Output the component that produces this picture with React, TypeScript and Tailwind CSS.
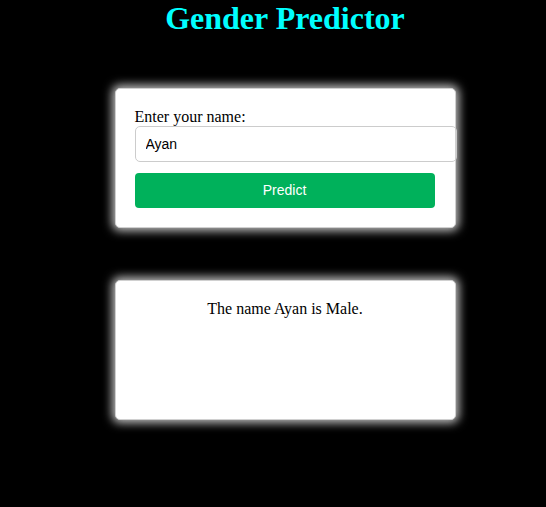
import { useState } from "react";

export default function App() {
  const [name, setName] = useState("Ayan");

  return (
    <div className="min-h-[507px] bg-black pl-[24px]">
      <div className="flex flex-col items-center font-['Liberation_Serif',serif]">
        {/* TITLE */}
        <h1 className="m-0 text-[32px] font-bold leading-[37px] text-[#00ffff]">
          Gender Predictor
        </h1>

        {/* FORM CARD */}
        <div className="mt-[51px] h-[140px] w-[341px] rounded-[5px] border border-[#d0d0d0] bg-white p-[19px] shadow-[0_0_10px_3px_rgba(255,255,255,0.75)]">
          <label className="block text-[16px] leading-[18px] text-black">
            Enter your name:
          </label>
          <input
            value={name}
            onChange={(e) => setName(e.target.value)}
            className="block h-[36px] w-[322px] rounded-[5px] border border-[#cccccc] px-[10px] font-['Liberation_Sans',sans-serif] text-[14px] text-black outline-none"
          />
          <button className="mt-[11px] block h-[35px] w-[300px] rounded-[4px] bg-[#00b15b] font-['Liberation_Sans',sans-serif] text-[14px] text-white">
            Predict
          </button>
        </div>

        {/* RESULT CARD */}
        <div className="mt-[52px] h-[140px] w-[341px] rounded-[5px] border border-[#d0d0d0] bg-white px-[19px] pt-[19px] text-center shadow-[0_0_10px_3px_rgba(255,255,255,0.75)]">
          <p className="text-[16px] leading-[18px] text-black">
            The name {name} is Male.
          </p>
        </div>
      </div>
    </div>
  );
}
